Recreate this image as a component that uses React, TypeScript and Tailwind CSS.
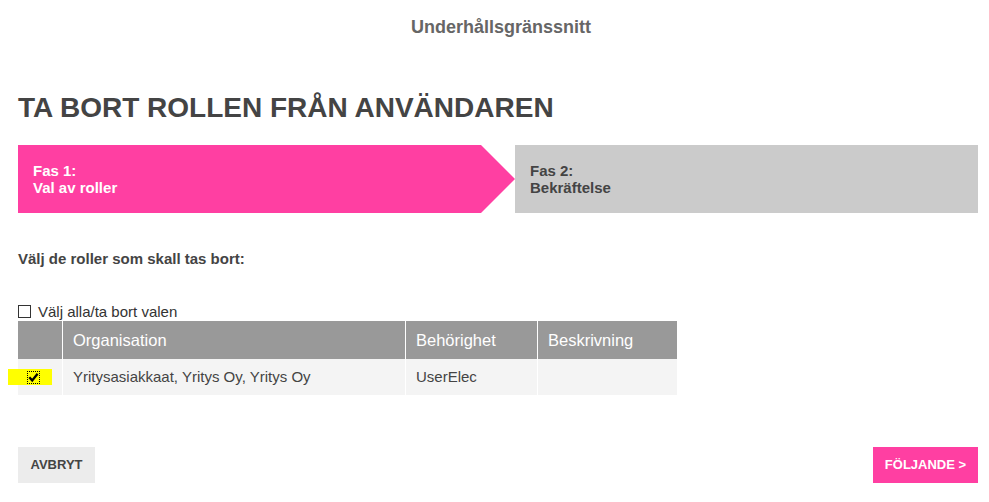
import React from "react";

function CheckMark() {
  return (
    <svg width="11" height="11" viewBox="0 0 11 11" className="block">
      <path d="M1.3 5.3 L4.2 8.4 L9.6 1.8" fill="none" stroke="#000" strokeWidth="2.3" />
    </svg>
  );
}

export default function App() {
  return (
    <div className="min-h-[502px] bg-white font-['Liberation_Sans',Arial,sans-serif] text-[#444]">
      <div className="ml-[18px] w-[960px]">
        <div className="pt-[18px] pl-[6px] text-center text-[18px] leading-[18px] font-bold text-[#666]">
          Underhållsgränssnitt
        </div>

        <h1 className="mt-[56px] text-[28px] leading-[32px] font-bold text-[#444]">
          TA BORT ROLLEN FRÅN ANVÄNDAREN
        </h1>

        <div className="mt-[21px] flex h-[68px]">
          <div className="flex w-[497px] flex-col justify-center bg-[#ff3fa2] pl-[15px] text-[15px] leading-[17px] font-bold text-white [clip-path:polygon(0_0,calc(100%_-_34px)_0,100%_50%,calc(100%_-_34px)_100%,0_100%)]">
            <span>Fas 1:</span>
            <span>Val av roller</span>
          </div>
          <div className="flex flex-1 flex-col justify-center bg-[#cbcbcb] pl-[15px] text-[15px] leading-[17px] font-bold text-[#444]">
            <span>Fas 2:</span>
            <span>Bekräftelse</span>
          </div>
        </div>

        <div className="mt-[37px] text-[15px] leading-[17px] font-bold text-[#444]">
          Välj de roller som skall tas bort:
        </div>

        <label className="mt-[36px] flex h-[17px] items-center gap-[7px] text-[15px] leading-[17px] text-[#333]">
          <span className="block h-[13px] w-[13px] border border-[#333] bg-white" />
          <span>Välj alla/ta bort valen</span>
        </label>

        <div className="mt-[1px] w-[659px]">
          <div className="flex h-[38px] bg-[#999] text-[16.5px] text-white">
            <div className="w-[45px] border-r border-white" />
            <div className="flex w-[343px] items-center border-r border-white pl-[10px]">Organisation</div>
            <div className="flex w-[132px] items-center border-r border-white pl-[10px]">Behörighet</div>
            <div className="flex flex-1 items-center pl-[10px]">Beskrivning</div>
          </div>
          <div className="flex h-[36px] bg-[#f4f4f4] text-[15px] text-[#444]">
            <div className="flex w-[45px] items-center border-r border-white">
              <div className="-ml-[10px] flex h-[16px] w-[44px] items-center bg-[#ffff00] pl-[19px]">
                <span className="flex h-[13px] w-[13px] items-center justify-center border border-dotted border-black">
                  <CheckMark />
                </span>
              </div>
            </div>
            <div className="flex w-[343px] items-center border-r border-white pl-[10px]">
              Yritysasiakkaat, Yritys Oy, Yritys Oy
            </div>
            <div className="flex w-[132px] items-center border-r border-white pl-[10px]">UserElec</div>
            <div className="flex-1" />
          </div>
        </div>

        <div className="mt-[52px] flex justify-between">
          <button className="flex h-[36px] w-[77px] items-center justify-center bg-[#ececec] text-[13px] font-bold text-[#444]">
            AVBRYT
          </button>
          <button className="flex h-[36px] w-[105px] items-center justify-center bg-[#ff3fa2] text-[13px] font-bold text-white">
            FÖLJANDE &gt;
          </button>
        </div>
      </div>
    </div>
  );
}
